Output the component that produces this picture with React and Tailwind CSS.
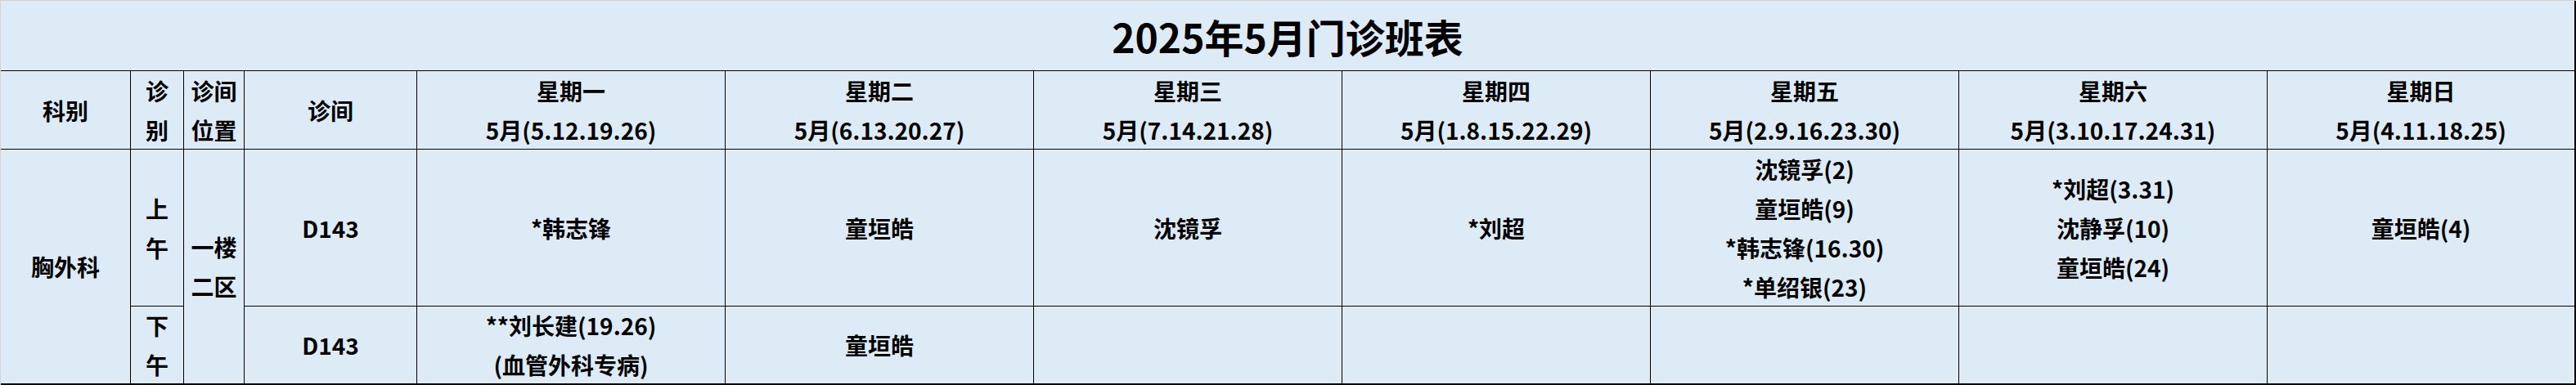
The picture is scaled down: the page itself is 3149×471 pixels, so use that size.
import React from 'react';

const days = [
  { name: '星期一', dates: '5月(5.12.19.26)' },
  { name: '星期二', dates: '5月(6.13.20.27)' },
  { name: '星期三', dates: '5月(7.14.21.28)' },
  { name: '星期四', dates: '5月(1.8.15.22.29)' },
  { name: '星期五', dates: '5月(2.9.16.23.30)' },
  { name: '星期六', dates: '5月(3.10.17.24.31)' },
  { name: '星期日', dates: '5月(4.11.18.25)' },
];

const morning = [
  ['*韩志锋'],
  ['童垣皓'],
  ['沈镜孚'],
  ['*刘超'],
  ['沈镜孚(2)', '童垣皓(9)', '*韩志锋(16.30)', '*单绍银(23)'],
  ['*刘超(3.31)', '沈静孚(10)', '童垣皓(24)'],
  ['童垣皓(4)'],
];

const afternoon = [
  ['**刘长建(19.26)', '(血管外科专病)'],
  ['童垣皓'],
  [],
  [],
  [],
  [],
  [],
];

// one grid cell, lines stacked and centred
const Cell = ({ lines = [], className = '' }) => (
  <div className={`flex flex-col items-center justify-center border-r border-b border-black text-center ${className}`}>
    {lines.map((t, i) => (
      <span key={i} className="whitespace-nowrap">{t}</span>
    ))}
  </div>
);

const App = () => {
  return (
    <div className="w-[3149px] h-[471px] bg-[#ddebf7] border-t border-l border-[#d4d4d4] font-['Noto_Sans_CJK_SC',sans-serif] font-bold text-black text-[28px] leading-[48px]">
      <div className="grid grid-cols-[159px_65px_74px_211px_repeat(7,377px)] grid-rows-[86px_96px_192px_96px]">
        <div className="col-span-11 flex items-center justify-center border-b border-r-2 border-black text-[48px] leading-none">
          2025年5月门诊班表
        </div>

        <Cell lines={['科别']} />
        <Cell lines={['诊', '别']} />
        <Cell lines={['诊间', '位置']} />
        <Cell lines={['诊间']} />
        {days.map((d, i) => (
          <Cell key={d.name} lines={[d.name, d.dates]} className={i === 6 ? 'border-r-2' : ''} />
        ))}

        <Cell lines={['胸外科']} className="row-span-2 border-b-2" />
        <Cell lines={['上', '午']} />
        <Cell lines={['一楼', '二区']} className="row-span-2 border-b-2" />
        <Cell lines={['D143']} />
        {morning.map((m, i) => (
          <Cell key={i} lines={m} className={i === 6 ? 'border-r-2' : ''} />
        ))}

        <Cell lines={['下', '午']} className="border-b-2" />
        <Cell lines={['D143']} className="border-b-2" />
        {afternoon.map((a, i) => (
          <Cell key={i} lines={a} className={`border-b-2 ${i === 6 ? 'border-r-2' : ''}`} />
        ))}
      </div>
    </div>
  );
};

export default App;
